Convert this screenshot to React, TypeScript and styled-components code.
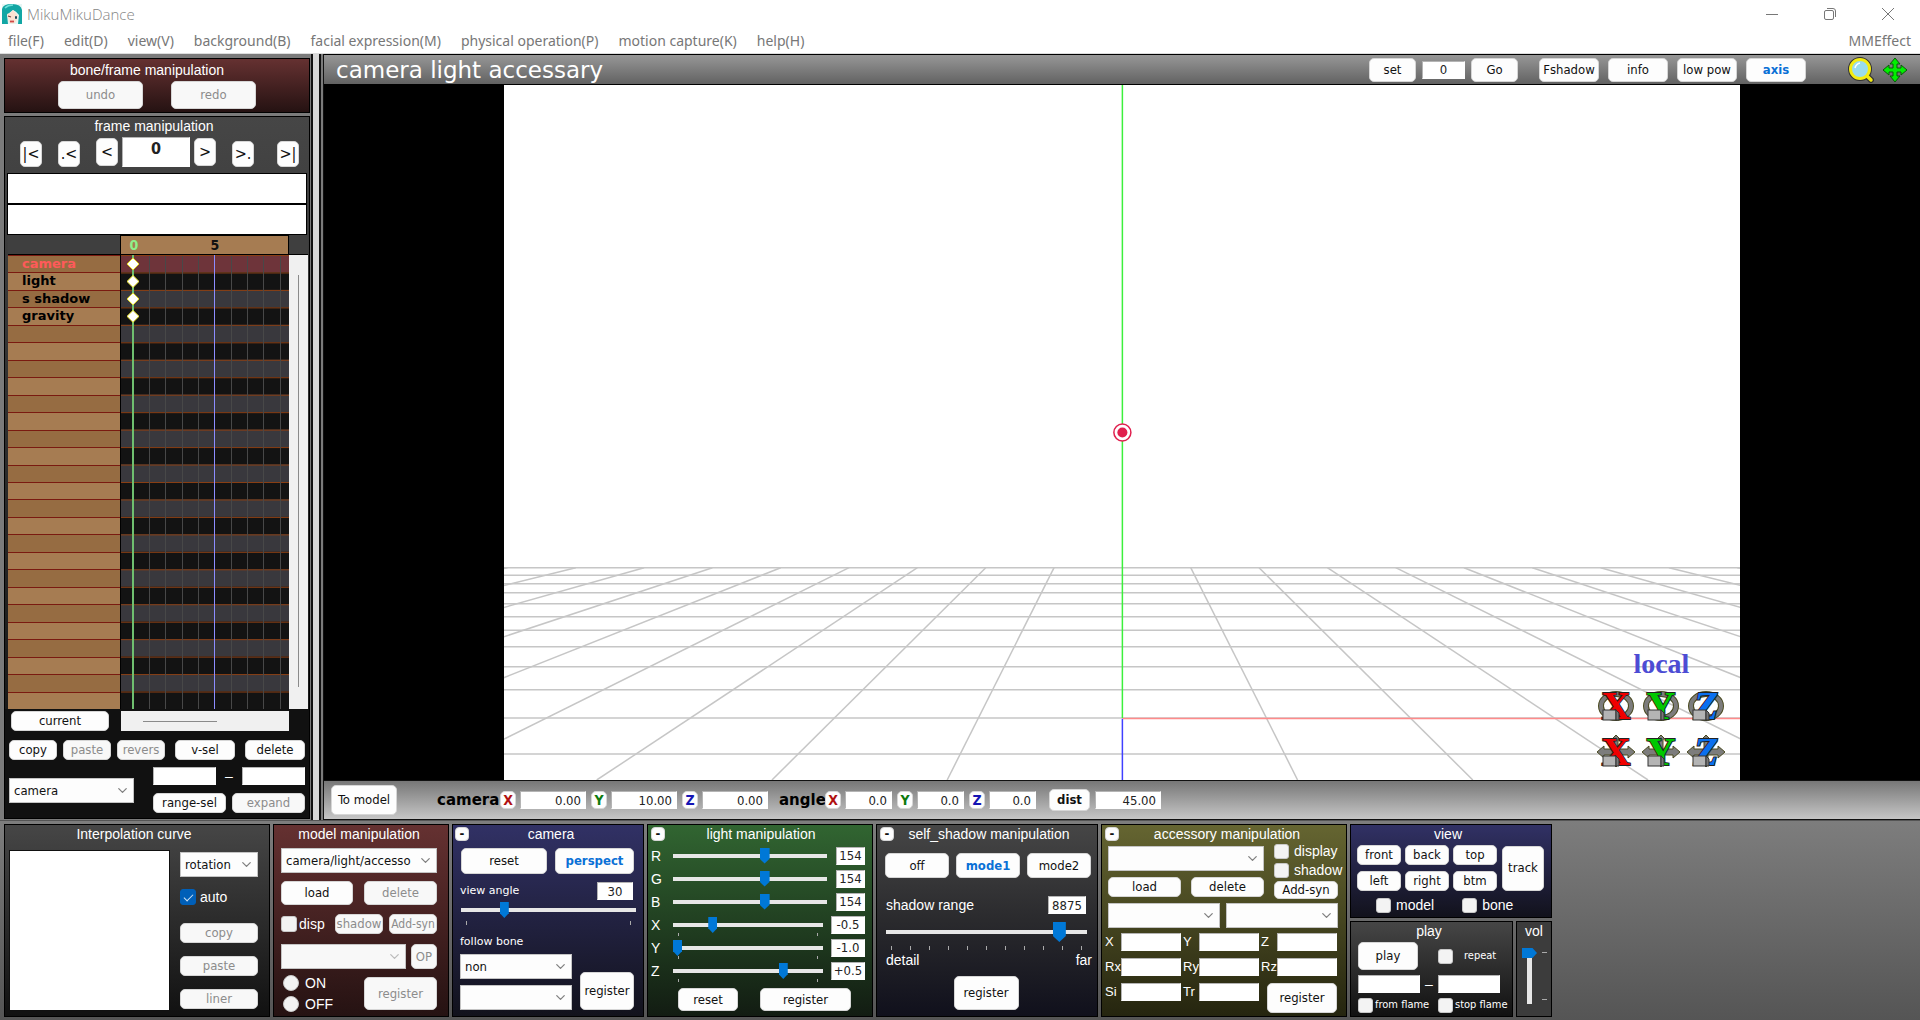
import React, { useId } from "react";
import styled, { createGlobalStyle, css } from "styled-components";
import { ChevronDown } from "lucide-react";

const ui = `"DejaVu Sans Condensed", "DejaVu Sans", sans-serif`;
const gothic = `"Liberation Sans", Arial, sans-serif`;
const wide = `"DejaVu Sans", sans-serif`;
const menuFont = `"Noto Sans", "Open Sans", sans-serif`;

const Global = createGlobalStyle`
  * { box-sizing: border-box; }
  body { margin: 0; background: #777; }
  button, input, select { margin: 0; font-family: ${ui}; font-size: 13px; }
`;

/* ---------- window frame ---------- */

const Window = styled.div`
  display: flex;
  flex-direction: column;
  min-height: 100vh;
  min-width: 1552px;
  background: #777;
  font-family: ${gothic};
`;

const TitleBar = styled.header`
  display: flex;
  align-items: center;
  gap: 5px;
  height: 28px;
  padding: 0 26px 0 2px;
  background: #fff;
  color: #858585;
  font-family: "Open Sans", sans-serif;
  font-weight: 300;
  font-size: 15px;
  line-height: 20px;
`;

const WindowButtons = styled.div`
  display: flex;
  gap: 46px;
  margin-left: auto;
`;

const WindowButton = styled.button`
  display: flex;
  padding: 0;
  border: 0;
  background: none;
`;

const MenuBar = styled.nav`
  display: flex;
  align-items: center;
  gap: 20px;
  height: 26px;
  padding: 0 9px 0 8px;
  background: #fff;
  border-bottom: 1px solid #ddd;
`;

const MenuLink = styled.a<{ $end?: boolean }>`
  color: #777;
  font-family: ${menuFont};
  font-size: 14px;
  line-height: 20px;
  text-decoration: none;
  margin-left: ${(p) => (p.$end ? "auto" : "0")};
`;

const Upper = styled.div`
  display: flex;
  flex: 1;
  min-height: 640px;
`;

/* ---------- shared controls ---------- */

const tones = {
  red: "linear-gradient(#653131, #251212)",
  grey: "linear-gradient(#464646, #111)",
  slate: "linear-gradient(#464646, #2a2a2d 50%, #10101c)",
  blue: "linear-gradient(#313165, #12121c)",
  green: "linear-gradient(#316531, #121c12)",
  olive: "linear-gradient(#656531, #25250f)",
  dark: "#3c3c3c",
};

const Panel = styled.section<{ $tone: keyof typeof tones; $w?: number; $pad?: string; $grow?: boolean }>`
  display: flex;
  flex-direction: column;
  width: ${(p) => (p.$w ? `${p.$w}px` : "auto")};
  flex: ${(p) => (p.$grow ? 1 : "none")};
  padding: ${(p) => p.$pad ?? "0"};
  border: 1px solid #000;
  background: ${(p) => tones[p.$tone]};
  color: #fff;
`;

const PanelTitle = styled.h2<{ $shift?: number }>`
  margin: 0;
  padding-right: ${(p) => p.$shift ?? 0}px;
  font-weight: 400;
  font-size: 14px;
  line-height: 18px;
  text-align: center;
  white-space: nowrap;
`;

const HeadGrid = styled.div`
  display: grid;
  grid-template-columns: 14px 1fr 8px;
  align-items: center;
`;

const Row = styled.div<{ $gap?: number; $top?: number; $left?: number; $align?: string; $justify?: string }>`
  display: flex;
  align-items: ${(p) => p.$align ?? "center"};
  justify-content: ${(p) => p.$justify ?? "flex-start"};
  gap: ${(p) => p.$gap ?? 0}px;
  margin-top: ${(p) => p.$top ?? 0}px;
  padding-left: ${(p) => p.$left ?? 0}px;
`;

const Column = styled.div<{ $gap?: number; $top?: number; $w?: number }>`
  display: flex;
  flex-direction: column;
  gap: ${(p) => p.$gap ?? 0}px;
  padding-top: ${(p) => p.$top ?? 0}px;
  width: ${(p) => (p.$w ? `${p.$w}px` : "auto")};
`;

const Button = styled.button<{ $w: number; $h?: number; $on?: boolean; $size?: number; $color?: string; $push?: boolean }>`
  display: flex;
  flex: none;
  align-items: center;
  justify-content: center;
  width: ${(p) => p.$w}px;
  height: ${(p) => p.$h ?? 20}px;
  margin-left: ${(p) => (p.$push ? "auto" : "0")};
  padding: 0;
  border: 1px solid #d6d6d6;
  border-radius: 5px;
  background: #fdfdfd;
  color: ${(p) => p.$color ?? (p.$on ? "#0a70d6" : "#111")};
  font-size: ${(p) => p.$size ?? 13}px;
  font-weight: ${(p) => (p.$on || p.$color ? 700 : 400)};
  line-height: 16px;
  white-space: nowrap;
  &:disabled {
    background: #f8f8f8;
    color: #8c8c8c;
  }
`;

const MinusButton = styled(Button)`
  border-radius: 4px;
  font-weight: 700;
  line-height: 12px;
`;

const Field = styled.input<{ $w: number; $h?: number; $align?: string; $bold?: boolean }>`
  flex: none;
  width: ${(p) => p.$w}px;
  height: ${(p) => p.$h ?? 18}px;
  padding: 0 4px;
  border: 1px solid #b4b4b4;
  border-right-color: #fff;
  border-bottom-color: #fff;
  background: #fff;
  color: #222;
  font-weight: ${(p) => (p.$bold ? 700 : 400)};
  text-align: ${(p) => p.$align ?? "left"};
`;

const TightField = styled(Field)`
  padding: 0 1px;
`;

const FrameField = styled(Field)`
  padding: 0 0 8px;
  font-size: 16px;
`;

const SelectBox = styled.span<{ $w: number }>`
  position: relative;
  display: flex;
  flex: none;
  width: ${(p) => p.$w}px;
  height: 25px;
  svg {
    position: absolute;
    right: 4px;
    top: 5px;
    pointer-events: none;
  }
`;

const NativeSelect = styled.select`
  appearance: none;
  width: 100%;
  padding: 0 0 0 4px;
  border: 1px solid #c4c4c4;
  border-radius: 0;
  background: #fdfdfd;
  color: #111;
  &:disabled {
    background: #f8f8f8;
    opacity: 1;
  }
`;

function Select({ w, label, value = "", disabled }: { w: number; label: string; value?: string; disabled?: boolean }) {
  return (
    <SelectBox $w={w}>
      <NativeSelect aria-label={label} defaultValue={value} disabled={disabled}>
        <option>{value}</option>
      </NativeSelect>
      <ChevronDown size={15} strokeWidth={2} color={disabled ? "#bbb" : "#808080"} />
    </SelectBox>
  );
}

const CheckLabel = styled.label<{ $small?: boolean; $gap?: number }>`
  display: flex;
  align-items: center;
  gap: ${(p) => p.$gap ?? 4}px;
  font-family: ${(p) => (p.$small ? ui : gothic)};
  font-size: ${(p) => (p.$small ? 11 : 14)}px;
  line-height: 16px;
  white-space: nowrap;
`;

const Box = styled.input<{ $size?: number }>`
  appearance: none;
  display: grid;
  flex: none;
  place-content: center;
  width: ${(p) => p.$size ?? 15}px;
  height: ${(p) => p.$size ?? 15}px;
  border: 1px solid #c8c8c8;
  border-radius: 3px;
  background: #f3f3f3;
  &[type="radio"] {
    border-radius: 50%;
  }
  &:checked {
    background: #005fb8;
    border-color: #005fb8;
  }
  &:checked::after {
    content: "";
    width: 8px;
    height: 4px;
    margin-bottom: 2px;
    border: solid #cfe3f5;
    border-width: 0 0 1px 1px;
    transform: rotate(-45deg);
  }
`;

const thumb = css<{ $thumb: number }>`
  appearance: none;
  width: ${(p) => p.$thumb}px;
  height: ${(p) => (p.$thumb > 12 ? 20 : 16)}px;
  margin-top: ${(p) => (p.$thumb > 12 ? -8 : -6)}px;
  border: 0;
  background: #0078d7;
  clip-path: polygon(0 0, 100% 0, 100% 70%, 50% 100%, 0 70%);
`;

const Range = styled.input<{ $thumb: number }>`
  appearance: none;
  display: block;
  width: 100%;
  height: ${(p) => (p.$thumb > 12 ? 20 : 16)}px;
  background: transparent;
  &::-webkit-slider-runnable-track {
    height: 4px;
    background: #e7e7e7;
  }
  &::-webkit-slider-thumb {
    ${thumb}
  }
`;

const VolumeRange = styled.input`
  appearance: none;
  writing-mode: vertical-lr;
  direction: rtl;
  width: 15px;
  height: 56px;
  background: transparent;
  &::-webkit-slider-runnable-track {
    width: 5px;
    background: #e7e7e7;
  }
  &::-webkit-slider-thumb {
    appearance: none;
    width: 15px;
    height: 10px;
    margin-left: -5px;
    background: #0078d7;
    clip-path: polygon(0 0, 70% 0, 100% 50%, 70% 100%, 0 100%);
  }
`;

const Ticks = styled.div<{ $h?: number; $vertical?: boolean }>`
  display: flex;
  flex-direction: ${(p) => (p.$vertical ? "column" : "row")};
  justify-content: space-between;
  height: ${(p) => p.$h ?? 4}px;
  padding: ${(p) => (p.$vertical ? "4px 0 4px 5px" : "0 5px")};
  span {
    width: ${(p) => (p.$vertical ? "5px" : "1px")};
    height: ${(p) => (p.$vertical ? "1px" : "auto")};
    background: #aaa;
  }
`;

const Caption = styled.span<{ $w?: number; $small?: boolean }>`
  width: ${(p) => (p.$w ? `${p.$w}px` : "auto")};
  flex: none;
  font-family: ${(p) => (p.$small ? wide : gothic)};
  font-size: ${(p) => (p.$small ? 11 : 14)}px;
  line-height: 18px;
  white-space: nowrap;
`;

/* ---------- left side ---------- */

const LeftSide = styled.aside`
  display: flex;
  flex: none;
  flex-direction: column;
  gap: 3px;
  width: 311px;
  padding: 4px 1px 1px 4px;
  background: #7b7b7b;
`;

const Splitter = styled.div`
  flex: none;
  width: 13px;
  border: solid #111;
  border-width: 0 1px 0 2px;
  background: linear-gradient(90deg, #d8d8d8 6px, #111 6px, #111 8px, #7b7b7b 8px);
`;

const FrameRow = styled.div`
  display: flex;
  align-items: flex-end;
  gap: 16px;
  height: 32px;
  padding: 0 10px 0 15px;
`;

const FrameCenter = styled.div`
  display: flex;
  align-items: center;
  gap: 4px;
`;

const StatusBox = styled.div`
  height: 31px;
  margin: 0 2px;
  border: 1px solid #000;
  background: #fff;
`;

const Timeline = styled.div`
  display: grid;
  flex: 1;
  grid-template-columns: 112px 169px 1fr;
  grid-template-rows: 20px 1fr;
  padding: 0 1px 0 3px;
  min-height: 0;
`;

const TimelineHead = styled.div`
  display: grid;
  grid-column: 2;
  grid-template-columns: 26px 55px 26px;
  border: 1px solid #000;
  background: #a67c52;
  font: 700 14px/19px ${ui};
  text-align: center;
  color: #111;
  span:first-child {
    color: #8ff08a;
  }
  span:last-child {
    grid-column: 3;
  }
`;

const HeadCorner = styled.div`
  border-bottom: 1px solid #000;
  background: #3f3f3f;
`;

const Names = styled.ul`
  display: grid;
  grid-column: 1;
  grid-template-rows: repeat(26, 1fr);
  margin: 0;
  padding: 0;
  list-style: none;
`;

const Name = styled.li<{ $active?: boolean; $alt?: boolean }>`
  min-height: 0;
  padding-left: 14px;
  border-top: 1px solid #7a1a10;
  background: ${(p) => (p.$alt ? "#a67c52" : "#966c42")};
  color: ${(p) => (p.$active ? "#ff5a5a" : "#000")};
  font: 700 13px/16px ${wide};
`;

const VScroll = styled.div`
  display: flex;
  justify-content: center;
  padding: 20px 0 22px;
  background: #f0f0f0;
  &::after {
    content: "";
    width: 1px;
    background: #8a8a8a;
  }
`;

const HScroll = styled.div`
  width: 168px;
  height: 20px;
  margin-left: 12px;
  padding: 10px 72px 0 22px;
  background: #f0f0f0;
  &::after {
    content: "";
    display: block;
    height: 1px;
    background: #8a8a8a;
  }
`;

const LeftFoot = styled.div`
  display: flex;
  height: 109px;
  flex-direction: column;
  padding: 2px 4px 0;
  background: #111;
`;

const chartRows = Array.from({ length: 26 }, (_, i) => i);

const ChartArea = styled.div`
  position: relative;
  min-height: 0;
  svg {
    position: absolute;
    inset: 0;
  }
`;

function KeyChart() {
  return (
    <ChartArea>
      <svg width="100%" height="100%" viewBox="0 0 169 455" preserveAspectRatio="none">
        {chartRows.map((i) => (
          <g key={i}>
            <rect x="0" y={i * 17.5} width="169" height="17.5" fill={i === 0 ? "#6e343a" : i % 2 ? "#131313" : "#39383d"} />
            <rect x="0" y={i * 17.5} width="169" height="1" fill="#8a3f14" />
          </g>
        ))}
        {[29, 45, 62, 78, 111, 127, 143, 160].map((x) => (
          <rect key={x} x={x} y="1" width="1" height="454" fill="#484848" />
        ))}
        <rect x="94" y="0" width="1" height="455" fill="#8c8cff" />
        <rect x="12" y="0" width="2" height="455" fill="#6fbf6f" />
        {[0, 1, 2, 3].map((i) => (
          <path key={i} d={`M13 ${i * 17.5 + 3}l6 6l-6 6l-6 -6z`} fill="#fff" stroke="#e8e020" strokeWidth="1" />
        ))}
        <rect x="0" y="0" width="1" height="455" fill="#000" />
      </svg>
    </ChartArea>
  );
}

/* ---------- stage ---------- */

const RightSide = styled.main`
  display: flex;
  flex: 1;
  flex-direction: column;
  min-width: 0;
`;

const TopBar = styled.div`
  display: flex;
  align-items: center;
  height: 31px;
  padding: 0 12px 0 12px;
  border: solid #000;
  border-width: 1px 0;
  background: linear-gradient(#979797, #626262);
`;

const TopTitle = styled.h1`
  margin: 0;
  color: #fff;
  font: 400 23px/28px ${wide};
  white-space: nowrap;
`;

const Group = styled.div<{ $gap: number; $before?: number; $push?: boolean }>`
  display: flex;
  align-items: center;
  gap: ${(p) => p.$gap}px;
  margin-left: ${(p) => (p.$push ? "auto" : `${p.$before ?? 0}px`)};
`;

const Stage = styled.div`
  display: flex;
  flex: 1;
  justify-content: center;
  min-height: 0;
  background: #000;
`;

const View3D = styled.div`
  position: relative;
  height: 100%;
  aspect-ratio: 1235 / 694;
  background: #fff;
  > svg {
    position: absolute;
    inset: 0;
  }
`;

const Gizmos = styled.div`
  position: absolute;
  right: 14px;
  bottom: 10px;
  display: grid;
  grid-template-columns: repeat(3, 40px);
  gap: 10px 5px;
  text-align: center;
`;

const LocalLabel = styled.div`
  grid-column: 1 / 4;
  color: #4c4cd4;
  font: 700 28px/28px "Liberation Serif", serif;
`;

const GizmoButton = styled.button`
  display: flex;
  padding: 0;
  border: 0;
  background: none;
  svg {
    overflow: visible;
  }
`;

function Gizmo({ letter, color, turn }: { letter: string; color: string; turn?: boolean }) {
  return (
    <GizmoButton aria-label={`${turn ? "rotate" : "move"} ${letter}`}>
      <svg width="40" height="36" viewBox="0 0 40 36">
        {turn ? (
          <>
            <ellipse cx="20" cy="18" rx="15" ry="12" fill="none" stroke="#4a4a20" strokeWidth="6" />
            <ellipse cx="20" cy="18" rx="15" ry="12" fill="none" stroke="#7c7c7c" strokeWidth="4" />
          </>
        ) : (
          <>
            <path d="M20 1l4 4h-2v24h2l-4 4l-4 -4h2v-24h-2z" fill="#7c7c7c" stroke="#4a4a20" />
            <path d="M1 18l7 -6v3h24v-3l7 6l-7 6v-3h-24v3z" fill="#7c7c7c" stroke="#4a4a20" />
          </>
        )}
        <text
          x="20"
          y="31"
          textAnchor="middle"
          fontFamily="Liberation Serif, serif"
          fontWeight="700"
          fontStyle={letter === "Z" ? "italic" : "normal"}
          fontSize="40"
          fill={color}
          stroke="#222"
          strokeWidth="2"
          paintOrder="stroke"
        >
          {letter}
        </text>
        <rect x="7" y="22" width="13" height="10" fill="#b4b4b4" stroke="#333" />
        <path d="M20 22l3 3v7h-3z" fill="#777" stroke="#333" />
      </svg>
    </GizmoButton>
  );
}

function Scene() {
  const top = 482;
  const spread = (y: number) => 0.5035 * (y - 346.5);
  return (
    <svg width="100%" height="100%" viewBox="0 0 1235 694">
      <g stroke="#c6c6c6" strokeWidth="1.5">
        {[482, 489.5, 498, 507, 518, 531, 544.5, 561, 581, 604, 632, 668].map((y) => (
          <line key={y} x1="0" x2="1235" y1={y} y2={y} />
        ))}
        {[-9, -8, -7, -6, -5, -4, -3, -2, -1, 1, 2, 3, 4, 5, 6, 7, 8, 9].map((k) => (
          <line key={k} x1={617.5 + k * spread(top)} y1={top} x2={617.5 + k * spread(694)} y2="694" />
        ))}
      </g>
      <line x1="617.5" x2="1235" y1="632.5" y2="632.5" stroke="#ff8a8a" strokeWidth="1.5" />
      <line x1="617.5" x2="617.5" y1="0" y2="632" stroke="#3cf03c" strokeWidth="1.5" />
      <line x1="617.5" x2="617.5" y1="633" y2="694" stroke="#4040ff" strokeWidth="1.5" />
      <circle cx="617.5" cy="347" r="8.5" fill="#fff" stroke="#e0204e" strokeWidth="1.5" />
      <circle cx="617.5" cy="347" r="5" fill="#e0204e" />
    </svg>
  );
}

const PoseBar = styled.div`
  display: flex;
  align-items: center;
  height: 40px;
  padding-left: 7px;
  border: solid #111;
  border-width: 1px 0;
  background: linear-gradient(#777, #c6c6c6);
`;

const PoseLabel = styled.span<{ $w: number; $before?: number }>`
  width: ${(p) => p.$w}px;
  margin-left: ${(p) => p.$before ?? 0}px;
  color: #000;
  font: 700 15px/18px ${wide};
  white-space: nowrap;
`;

/* ---------- bottom ---------- */

const BottomDock = styled.footer`
  display: flex;
  flex: none;
  gap: 3px;
  padding: 3px 3px 3px 4px;
  border-top: 1px solid #555;
  background: linear-gradient(#7d7d7d, #555);
`;

const CurveBox = styled.div`
  width: 159px;
  height: 159px;
  background: #fff;
  outline: 1px solid #111;
`;

const AxisRow = styled.div`
  display: flex;
  align-items: center;
  height: 23px;
`;

const TrackWrap = styled.div<{ $w: number; $ticks?: boolean }>`
  width: ${(p) => p.$w}px;
  padding-top: ${(p) => (p.$ticks ? 4 : 0)}px;
`;

const ParamGrid = styled.div`
  display: grid;
  grid-template-columns: 16px 60px 18px 60px 18px 60px;
  gap: 7px 0;
  margin-top: 5px;
  align-items: start;
`;

const ParamLabel = styled.label`
  padding-left: 2px;
  font-size: 13px;
  line-height: 18px;
  white-space: nowrap;
  &:nth-of-type(3n + 1) {
    padding-left: 0;
  }
`;

const RegisterCell = styled.div`
  display: flex;
  grid-column: 5 / 7;
  justify-content: flex-end;
`;

const ViewGrid = styled.div`
  display: grid;
  grid-template-columns: repeat(3, 44px);
  gap: 6px 4px;
`;

const PlayGrid = styled.div<{ $top: number }>`
  display: grid;
  grid-template-columns: 62px 18px 62px;
  align-items: center;
  margin-top: ${(p) => p.$top}px;
  text-align: center;
  > :nth-child(2):last-child {
    grid-column: 3;
  }
`;

function Head({ children }: { children: string }) {
  return (
    <HeadGrid>
      <MinusButton $w={14} $h={14} aria-label={`collapse ${children}`}>-</MinusButton>
      <PanelTitle>{children}</PanelTitle>
    </HeadGrid>
  );
}

function LightRow({ name, value, min, max, pos, ticks }: { name: string; value: string; min: number; max: number; pos: number; ticks?: boolean }) {
  return (
    <AxisRow>
      <Caption $w={22}>{name}</Caption>
      <TrackWrap $w={ticks ? 150 : 154} $ticks={ticks}>
        <Range type="range" $thumb={ticks ? 9 : 10} min={min} max={max} step="any" defaultValue={pos} aria-label={`light ${name}`} />
        {ticks && (
          <Ticks $h={3}>
            <span />
            <span />
          </Ticks>
        )}
      </TrackWrap>
      <Group $gap={0} $push>
        <TightField $w={ticks ? 34 : 29} $align="center" defaultValue={value} aria-label={`${name} value`} />
      </Group>
    </AxisRow>
  );
}

function Param({ name }: { name: string }) {
  const id = useId();
  return (
    <>
      <ParamLabel htmlFor={id}>{name}</ParamLabel>
      <Field id={id} $w={60} />
    </>
  );
}

const axisColors = { X: "#b01010", Y: "#0c7a0c", Z: "#1414b4" };

function PoseInputs({ kind, values, w }: { kind: string; values: string[]; w: number }) {
  return (
    <Group $gap={5}>
      {(["X", "Y", "Z"] as const).map((a, i) => (
        <Group key={a} $gap={4}>
          <Button $w={16} $h={18} $color={axisColors[a]} $size={14}>{a}</Button>
          <Field $w={w} $align="right" defaultValue={values[i]} aria-label={`${kind} ${a}`} />
        </Group>
      ))}
    </Group>
  );
}

export default function App() {
  return (
    <>
      <Global />
      <Window>
        <TitleBar>
          <svg width="20" height="20" viewBox="0 0 20 20">
            <rect width="20" height="20" fill="#e6f6f4" />
            <path d="M0 20V5q1-5 10-5q9 0 10 6v14h-4l1-9q-3-4-6-5q-4 3-6 5l1 9z" fill="#12a6a4" />
            <path d="M5 10q4-1 6-4q3 3 5 6l-2 6q-4 3-7 0z" fill="#fbe3d2" />
            <path d="M6 12l3 1" stroke="#7a3c3c" strokeWidth="1.3" />
            <path d="M13 13.500h2" stroke="#1c4a5a" strokeWidth="2.500" />
            <path d="M8 17.500h4" stroke="#d04848" strokeWidth="1.800" />
            <path d="M3 4q3-3 8-3" stroke="#6fe0da" strokeWidth="1.5" fill="none" />
          </svg>
          <span>MikuMikuDance</span>
          <WindowButtons>
            <WindowButton aria-label="minimize">
              <svg width="12" height="12" viewBox="0 0 12 12" stroke="#777"><path d="M0 6.5h12" /></svg>
            </WindowButton>
            <WindowButton aria-label="restore">
              <svg width="12" height="12" viewBox="0 0 12 12" fill="none" stroke="#777">
                <rect x=".5" y="2.500" width="9" height="9" rx="1.500" />
                <path d="M3 .5h6q2.500 0 2.500 2.500v6" />
              </svg>
            </WindowButton>
            <WindowButton aria-label="close">
              <svg width="12" height="12" viewBox="0 0 12 12" stroke="#777"><path d="M0 0L12 12M12 0L0 12" /></svg>
            </WindowButton>
          </WindowButtons>
        </TitleBar>
        <MenuBar>
          {["file(F)", "edit(D)", "view(V)", "background(B)", "facial expression(M)", "physical operation(P)", "motion capture(K)", "help(H)"].map((m) => (
            <MenuLink key={m} href="#">{m}</MenuLink>
          ))}
          <MenuLink href="#" $end>MMEffect</MenuLink>
        </MenuBar>

        <Upper>
          <LeftSide>
            <Panel $tone="red" $pad="2px 0 3px">
              <PanelTitle $shift={20}>bone/frame manipulation</PanelTitle>
              <Row $gap={28} $top={2} $justify="center">
                <Button $w={85} $h={28} disabled>undo</Button>
                <Button $w={85} $h={28} disabled>redo</Button>
              </Row>
            </Panel>
            <Panel $tone="grey" $grow>
              <PanelTitle $shift={6}>frame manipulation</PanelTitle>
              <FrameRow>
                <Button $w={22} $h={26} $size={16}>|&lt;</Button>
                <Button $w={22} $h={26} $size={16}>.&lt;</Button>
                <FrameCenter>
                  <Button $w={22} $h={28} $size={16}>&lt;</Button>
                  <FrameField $w={68} $h={30} $align="center" $bold defaultValue="0" aria-label="frame" />
                  <Button $w={22} $h={28} $size={16}>&gt;</Button>
                </FrameCenter>
                <Button $w={22} $h={26} $size={16}>&gt;.</Button>
                <Button $w={22} $h={26} $size={16} $push>&gt;|</Button>
              </FrameRow>
              <Column $top={6}>
                <StatusBox />
                <StatusBox />
              </Column>
              <Timeline>
                <HeadCorner />
                <TimelineHead>
                  <span>0</span>
                  <span>5</span>
                </TimelineHead>
                <HeadCorner />
                <Names>
                  {chartRows.map((i) => (
                    <Name key={i} $active={i === 0} $alt={i % 2 === 1}>
                      {["camera", "light", "s shadow", "gravity"][i] ?? ""}
                    </Name>
                  ))}
                </Names>
                <KeyChart />
                <VScroll />
              </Timeline>
              <LeftFoot>
                <Row $left={2}>
                  <Button $w={98}>current</Button>
                  <HScroll />
                </Row>
                <Row $top={9} $gap={6}>
                  <Button $w={48}>copy</Button>
                  <Button $w={48} disabled>paste</Button>
                  <Button $w={48} disabled>revers</Button>
                  <Button $w={60} $push>v-sel</Button>
                  <Button $w={60} $push>delete</Button>
                </Row>
                <Row $top={7} $justify="space-between">
                  <Select w={125} label="target" value="camera" />
                  <Column $gap={8} $w={152}>
                    <Row $justify="space-between">
                      <Field $w={63} aria-label="range start" />
                      <Caption>–</Caption>
                      <Field $w={63} aria-label="range end" />
                    </Row>
                    <Row $justify="space-between">
                      <Button $w={73}>range-sel</Button>
                      <Button $w={73} disabled>expand</Button>
                    </Row>
                  </Column>
                </Row>
              </LeftFoot>
            </Panel>
          </LeftSide>
          <Splitter />
          <RightSide>
            <TopBar>
              <TopTitle>camera light accessary</TopTitle>
              <Group $gap={6} $push>
                <Button $w={47} $h={24}>set</Button>
                <Field $w={43} $align="center" defaultValue="0" aria-label="frame set" />
                <Button $w={47} $h={24}>Go</Button>
              </Group>
              <Group $gap={9} $before={21}>
                <Button $w={60} $h={24}>Fshadow</Button>
                <Button $w={60} $h={24}>info</Button>
                <Button $w={60} $h={24}>low pow</Button>
                <Button $w={60} $h={24} $on>axis</Button>
              </Group>
              <Group $gap={8} $before={42}>
                <svg width="26" height="26" viewBox="0 0 26 26">
                  <path d="M18 18l5 5" stroke="#333" strokeWidth="6" strokeLinecap="round" />
                  <circle cx="12" cy="12" r="9.500" fill="#9adcec" stroke="#333" strokeWidth="5" />
                  <path d="M18 18l5 5" stroke="#f4ec10" strokeWidth="3.500" strokeLinecap="round" />
                  <circle cx="12" cy="12" r="9.500" fill="#9adcec" stroke="#f4ec10" strokeWidth="3" />
                  <path d="M7 11q1-4 5-5" stroke="#fff" strokeWidth="1.500" fill="none" />
                </svg>
                <svg width="26" height="26" viewBox="0 0 26 26">
                  <path
                    d="M13 1l5 6h-3v4h4v-3l6 5l-6 5v-3h-4v4h3l-5 6l-5-6h3v-4h-4v3l-6-5l6-5v3h4v-4h-3z"
                    fill="#00f000"
                    stroke="#0a5a0a"
                  />
                </svg>
              </Group>
            </TopBar>
            <Stage>
              <View3D>
                <Scene />
                <Gizmos>
                  <LocalLabel>local</LocalLabel>
                  <Gizmo letter="X" color="#f00000" turn />
                  <Gizmo letter="Y" color="#00c800" turn />
                  <Gizmo letter="Z" color="#0a70f0" turn />
                  <Gizmo letter="X" color="#f00000" />
                  <Gizmo letter="Y" color="#00c800" />
                  <Gizmo letter="Z" color="#0a70f0" />
                </Gizmos>
              </View3D>
            </Stage>
            <PoseBar>
              <Button $w={66} $h={30}>To model</Button>
              <PoseLabel $w={63} $before={40}>camera</PoseLabel>
              <PoseInputs kind="camera" w={66} values={["0.00", "10.00", "0.00"]} />
              <PoseLabel $w={46} $before={11}>angle</PoseLabel>
              <PoseInputs kind="angle" w={47} values={["0.0", "0.0", "0.0"]} />
              <Group $gap={5} $before={13}>
                <Button $w={41} $h={22} $color="#111">dist</Button>
                <Field $w={66} $align="right" defaultValue="45.00" aria-label="distance" />
              </Group>
            </PoseBar>
          </RightSide>
        </Upper>

        <BottomDock>
          <Panel $tone="grey" $w={266} $pad="0 5px 6px">
            <PanelTitle $shift={6}>Interpolation curve</PanelTitle>
            <Row $gap={11} $top={8} $align="flex-start">
              <CurveBox />
              <Column $top={1} $w={78}>
                <Select w={78} label="curve" value="rotation" />
                <Row $top={12}>
                  <CheckLabel>
                    <Box type="checkbox" $size={16} defaultChecked />
                    auto
                  </CheckLabel>
                </Row>
                <Row $top={18}><Button $w={78} disabled>copy</Button></Row>
                <Row $top={13}><Button $w={78} disabled>paste</Button></Row>
                <Row $top={13}><Button $w={78} disabled>liner</Button></Row>
              </Column>
            </Row>
          </Panel>

          <Panel $tone="red" $w={176} $pad="0 11px 0 7px">
            <PanelTitle>model manipulation</PanelTitle>
            <Row $top={5}><Select w={156} label="model" value="camera/light/accesso" /></Row>
            <Row $top={8} $justify="space-between">
              <Button $w={72} $h={24}>load</Button>
              <Button $w={73} $h={24} disabled>delete</Button>
            </Row>
            <Row $top={9} $gap={6}>
              <CheckLabel $gap={2}>
                <Box type="checkbox" $size={16} />
                disp
              </CheckLabel>
              <Button $w={48} $push disabled>shadow</Button>
              <Button $w={48} $size={12} disabled>Add-syn</Button>
            </Row>
            <Row $top={10} $gap={5}>
              <Select w={125} label="model option" disabled />
              <Button $w={26} $h={25} disabled>OP</Button>
            </Row>
            <Row $top={6} $left={2} $justify="space-between">
              <Column $gap={5} $w={70}>
                <CheckLabel $gap={6}><Box type="radio" name="phys" $size={16} />ON</CheckLabel>
                <CheckLabel $gap={6}><Box type="radio" name="phys" $size={16} />OFF</CheckLabel>
              </Column>
              <Button $w={73} $h={33} disabled>register</Button>
            </Row>
          </Panel>

          <Panel $tone="blue" $w={192} $pad="0 2px">
            <Head>camera</Head>
            <Column>
              <Row $top={5} $left={6} $gap={8}>
                <Button $w={86} $h={26}>reset</Button>
                <Button $w={79} $h={26} $on>perspect</Button>
              </Row>
              <Row $top={8} $left={5}>
                <Caption $small $w={137}>view angle</Caption>
                <Field $w={36} $align="center" defaultValue="30" aria-label="view angle value" />
              </Row>
              <Row $top={2} $left={6}>
                <TrackWrap $w={175}>
                  <Range type="range" $thumb={9} min={1} max={125} defaultValue={30} aria-label="view angle" />
                  <Row $top={3} />
                  <Ticks>
                    <span />
                    <span />
                  </Ticks>
                </TrackWrap>
              </Row>
              <Row $top={8} $left={5}><Caption $small>follow bone</Caption></Row>
              <Row $top={3} $left={5} $gap={8} $align="flex-end">
                <Column $gap={6}>
                  <Select w={112} label="follow model" value="non" />
                  <Select w={112} label="follow bone" />
                </Column>
                <Button $w={54} $h={38}>register</Button>
              </Row>
            </Column>
          </Panel>

          <Panel $tone="green" $w={226} $pad="0 7px 0 3px">
            <Head>light manipulation</Head>
            <Column $top={1}>
              <LightRow name="R" value="154" min={0} max={256} pos={154} />
              <LightRow name="G" value="154" min={0} max={256} pos={154} />
              <LightRow name="B" value="154" min={0} max={256} pos={154} />
              <LightRow name="X" value="-0.5" min={-1} max={1} pos={-0.5} ticks />
              <LightRow name="Y" value="-1.0" min={-1} max={1} pos={-1} ticks />
              <LightRow name="Z" value="+0.5" min={-1} max={1} pos={0.5} ticks />
            </Column>
            <Row $top={6} $left={27} $gap={22}>
              <Button $w={60} $h={23}>reset</Button>
              <Button $w={91} $h={23}>register</Button>
            </Row>
          </Panel>

          <Panel $tone="slate" $w={222} $pad="0 5px 0 3px">
            <Head>self_shadow manipulation</Head>
            <Row $top={10} $left={5} $gap={7}>
              <Button $w={64} $h={25}>off</Button>
              <Button $w={64} $h={25} $on>mode1</Button>
              <Button $w={64} $h={25}>mode2</Button>
            </Row>
            <Row $top={18} $left={6} $align="flex-end">
              <Caption $w={162}>shadow range</Caption>
              <TightField $w={38} $align="center" defaultValue="8875" aria-label="shadow range value" />
            </Row>
            <Row $top={8} $left={6}>
              <TrackWrap $w={201}>
                <Range type="range" $thumb={13} min={0} max={10000} defaultValue={8875} aria-label="shadow range" />
                <Row $top={4} />
                <Ticks>
                  {Array.from({ length: 11 }, (_, i) => (
                    <span key={i} />
                  ))}
                </Ticks>
              </TrackWrap>
            </Row>
            <Row $top={1} $left={6} $justify="space-between">
              <Caption>detail</Caption>
              <Caption>far</Caption>
            </Row>
            <Row $top={7} $justify="center">
              <Button $w={65} $h={34}>register</Button>
            </Row>
          </Panel>

          <Panel $tone="olive" $w={246} $pad="0 3px">
            <Head>accessory manipulation</Head>
            <Row $left={3} $gap={10} $align="flex-start">
              <Column $gap={6} $top={3} $w={156}>
                <Select w={156} label="accessory" />
                <Row $justify="space-between">
                  <Button $w={73}>load</Button>
                  <Button $w={73}>delete</Button>
                </Row>
              </Column>
              <Column $gap={3}>
                <CheckLabel $gap={5}><Box type="checkbox" />display</CheckLabel>
                <CheckLabel $gap={5}><Box type="checkbox" />shadow</CheckLabel>
                <Button $w={64} $h={18}>Add-syn</Button>
              </Column>
            </Row>
            <Row $left={3} $top={4} $gap={6}>
              <Select w={112} label="parent model" />
              <Select w={112} label="parent bone" />
            </Row>
            <ParamGrid>
              <Param name="X" />
              <Param name="Y" />
              <Param name="Z" />
              <Param name="Rx" />
              <Param name="Ry" />
              <Param name="Rz" />
              <Param name="Si" />
              <Param name="Tr" />
              <RegisterCell>
                <Button $w={70} $h={30}>register</Button>
              </RegisterCell>
            </ParamGrid>
          </Panel>

          <Column $gap={3}>
            <Panel $tone="blue" $w={202} $pad="0 6px 4px">
              <PanelTitle $shift={6}>view</PanelTitle>
              <Row $gap={5} $top={2}>
                <ViewGrid>
                  {["front", "back", "top", "left", "right", "btm"].map((v) => (
                    <Button key={v} $w={44}>{v}</Button>
                  ))}
                </ViewGrid>
                <Button $w={42} $h={45}>track</Button>
              </Row>
              <Row $left={19} $top={6} $gap={28}>
                <CheckLabel $gap={5}><Box type="checkbox" />model</CheckLabel>
                <CheckLabel $gap={5}><Box type="checkbox" />bone</CheckLabel>
              </Row>
            </Panel>
            <Row $gap={3} $align="stretch">
              <Panel $tone="grey" $w={163} $pad="0 0 3px 7px">
                <PanelTitle $shift={12}>play</PanelTitle>
                <PlayGrid $top={2}>
                  <Button $w={60} $h={28}>play</Button>
                  <CheckLabel $small $gap={11}><Box type="checkbox" />repeat</CheckLabel>
                </PlayGrid>
                <PlayGrid $top={5}>
                  <Field $w={62} aria-label="play from" />
                  <Caption>–</Caption>
                  <Field $w={62} aria-label="play to" />
                </PlayGrid>
                <PlayGrid $top={4}>
                  <CheckLabel $small $gap={2}><Box type="checkbox" />from flame</CheckLabel>
                  <CheckLabel $small $gap={2}><Box type="checkbox" />stop flame</CheckLabel>
                </PlayGrid>
              </Panel>
              <Panel $tone="dark" $w={36} $pad="0 0 0 5px">
                <PanelTitle $shift={5}>vol</PanelTitle>
                <Row $top={8} $align="flex-start">
                  <VolumeRange type="range" min={0} max={100} defaultValue={100} aria-label="volume" />
                  <Ticks $vertical $h={56}>
                    <span />
                    <span />
                  </Ticks>
                </Row>
              </Panel>
            </Row>
          </Column>
        </BottomDock>
      </Window>
    </>
  );
}
